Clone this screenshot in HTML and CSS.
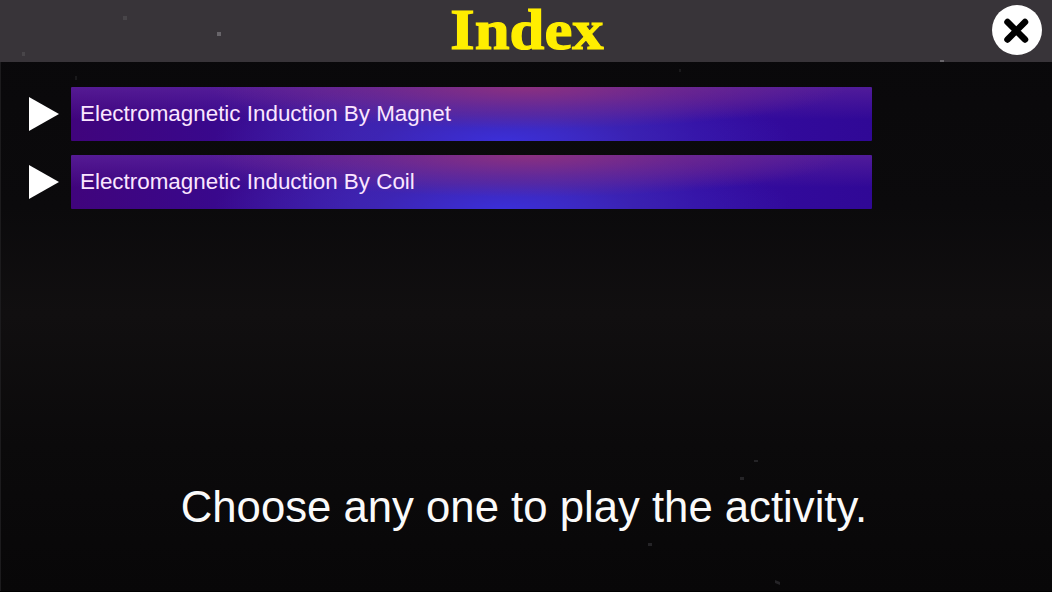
FILE: index.html
```html
<!DOCTYPE html>
<html lang="en">
<head>
  <meta charset="UTF-8">
  <meta name="viewport" content="width=device-width, initial-scale=1.0">
  <title>Index</title>
  <link rel="stylesheet" href="styles.css">
</head>
<body>
  <header class="topbar">
    <h1>Index</h1>
    <button class="close-button" aria-label="Close">
      <svg width="50" height="50" viewBox="0 0 50 50">
        <path d="M15.5 17L33 34.5M33 17L15.5 34.5"/>
      </svg>
    </button>
  </header>

  <main>
    <ul class="activities">
      <li>
        <svg class="play" width="30" height="34" viewBox="0 0 30 34"><path d="M0 0L30 17L0 34Z"/></svg>
        <a class="activity">Electromagnetic Induction By Magnet</a>
      </li>
      <li>
        <svg class="play" width="30" height="34" viewBox="0 0 30 34"><path d="M0 0L30 17L0 34Z"/></svg>
        <a class="activity">Electromagnetic Induction By Coil</a>
      </li>
    </ul>
    <p class="hint">Choose any one to play the activity.</p>
  </main>

  <!-- floating dust -->
  <svg class="dust" width="1052" height="592" viewBox="0 0 1052 592">
    <g fill="#68656a">
      <rect x="217" y="32" width="4" height="4"/>
      <rect x="940" y="60" width="4" height="2"/>
    </g>
    <g fill="#484549">
      <rect x="123" y="16" width="4" height="4"/>
      <rect x="22" y="52" width="3" height="4"/>
    </g>
    <g fill="#252427">
      <rect x="754" y="460" width="4" height="2"/>
      <rect x="740" y="477" width="4" height="3"/>
      <rect x="648" y="543" width="4" height="3"/>
      <path d="M775 580l5 2v3l-5-2z"/>
      <rect x="679" y="69" width="2" height="3" opacity=".6"/>
      <rect x="75" y="76" width="2" height="4" opacity=".6"/>
    </g>
  </svg>
</body>
</html>
```
FILE: styles.css
```css
* {
  margin: 0;
  padding: 0;
  box-sizing: border-box;
}

body {
  height: 100vh;
  display: flex;
  flex-direction: column;
  overflow: hidden;
  background: linear-gradient(180deg, #09080a 0%, #0b0a0c 35%, #110f10 53%, #0b0a0b 75%, #080708 100%);
  border-bottom: 1px solid #000;
  color: #fafafa;
  font-family: "Liberation Sans", Arial, sans-serif;
}

.topbar {
  height: 62px;
  flex-shrink: 0;
  display: grid;
  grid-template-columns: 1fr auto 1fr;
  align-items: center;
  padding: 0 10px 2px 12px;
  background: #383439;
}

h1 {
  grid-column: 2;
  font-family: "Liberation Serif", "Times New Roman", serif;
  font-size: 58px;
  font-weight: bold;
  line-height: 60px;
  color: #ffee00;
  -webkit-text-stroke: 1.2px #ffee00;
  transform: scaleX(1.08);
}

.close-button {
  justify-self: end;
  width: 50px;
  height: 50px;
  border: none;
  border-radius: 50%;
  background: white;
  cursor: pointer;
}

.close-button svg {
  display: block;
  fill: none;
  stroke: #000;
  stroke-width: 6.5;
  stroke-linecap: round;
}

main {
  flex: 1;
  display: flex;
  flex-direction: column;
  justify-content: space-between;
  padding: 25px 0 57px;
  border-left: 1px solid #1c1b1d;
}

.activities {
  list-style: none;
  display: flex;
  flex-direction: column;
  gap: 14px;
  padding-left: 28px;
}

.activities li {
  display: flex;
  align-items: center;
  gap: 12px;
}

.play {
  fill: white;
}

.activity {
  width: 801px;
  height: 54px;
  padding-left: 9px;
  border-radius: 1px;
  background:
    radial-gradient(ellipse 320px 42px at 57% 0, rgba(145, 50, 124, 0.9), rgba(125, 45, 135, 0.55) 50%, transparent),
    radial-gradient(ellipse 290px 60px at 54% 100%, #3b2fd8, rgba(59, 43, 190, 0.55) 45%, transparent),
    linear-gradient(180deg, rgba(92, 34, 155, 0.75), transparent 60%),
    linear-gradient(90deg, #40047c 0%, #39088c 18%, #401ca4 36%, #4020aa 60%, #340ca0 78%, #300896 100%);
  font-size: 22.4px;
  line-height: 54px;
  color: #fbe6ff;
}

.hint {
  padding-right: 5px;
  font-size: 43.7px;
  line-height: 54px;
  text-align: center;
}

.dust {
  position: absolute;
  top: 0;
  left: 0;
  pointer-events: none;
}
```
